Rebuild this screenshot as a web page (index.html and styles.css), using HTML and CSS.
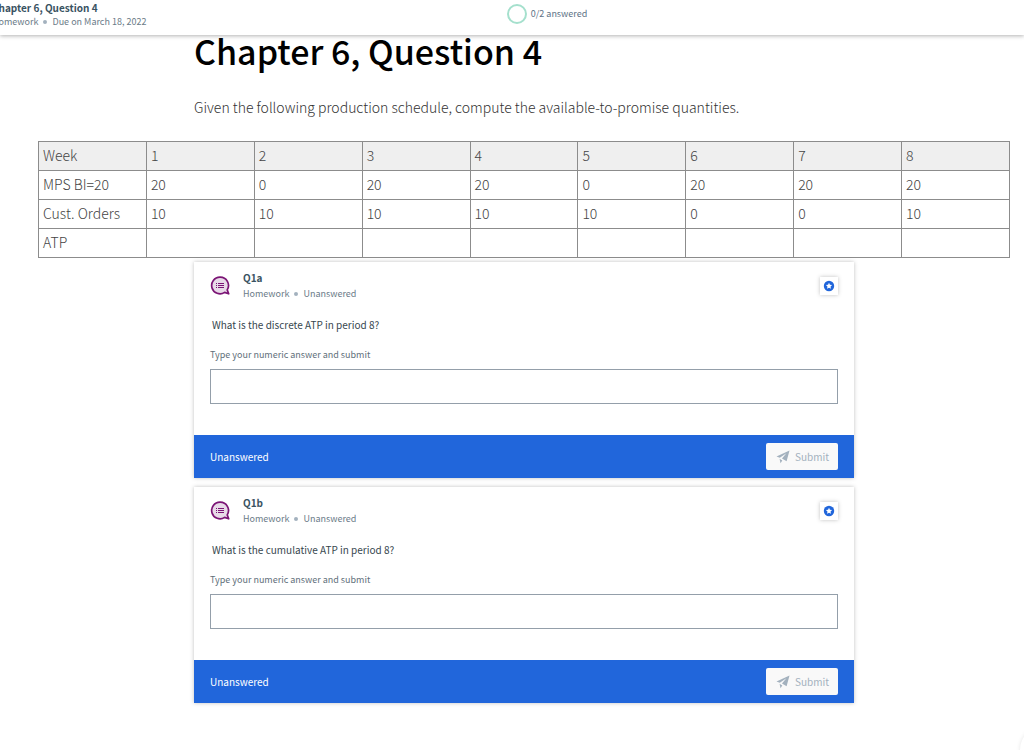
FILE: index.html
```html
<!DOCTYPE html>
<html lang="en">
<head>
    <meta charset="UTF-8">
    <meta name="viewport" content="width=device-width, initial-scale=1.0">
    <title>Chapter 6, Question 4</title>
    <link rel="stylesheet" href="styles.css">
</head>
<body>
    <svg class="sprite" aria-hidden="true">
        <symbol id="icon-question" viewBox="0 0 20 20">
            <path d="M10 1.2a8.3 8.3 0 1 0 4.6 15.2l4.1 1.4-1.5-3.9A8.3 8.3 0 0 0 10 1.2z" fill="#e8dae8" stroke="#7b1475" stroke-width="1.7" stroke-linejoin="round"/>
            <path d="M6 7.5h1M6 9.5h1M6 11.5h1M8 7.5h6M8 9.5h6M8 11.5h6" stroke="#7b1475"/>
        </symbol>
        <symbol id="icon-star" viewBox="0 0 12 12">
            <circle cx="6" cy="6" r="5.2" fill="#2166db"/>
            <path d="M6 2.8l.95 2 2.15.3-1.55 1.5.37 2.2L6 7.75 4.08 8.8l.37-2.2L2.9 5.1l2.15-.3z" fill="#fff"/>
        </symbol>
        <symbol id="icon-send" viewBox="0 0 14 14">
            <path d="M13.5.5L.5 6.5l3.3 1.3L10.4 3.2 6 8.6l4.6 2.6zM3.6 8.8l.9 4.4 1.8-2.8z" fill="#a3b1be"/>
        </symbol>
    </svg>

    <header class="topbar">
        <div class="topbar-title">
            <strong>Chapter 6, Question 4</strong>
            <div class="meta">Homework <span class="dot"></span> Due on March 18, 2022</div>
        </div>
        <div class="progress">
            <span class="ring"></span>
            <span>0/2 answered</span>
        </div>
    </header>

    <main>
        <div class="intro">
            <h1>Chapter 6, Question 4</h1>
            <p>Given the following production schedule, compute the available-to-promise quantities.</p>
        </div>

        <table class="schedule">
            <thead>
                <tr><th>Week</th><th>1</th><th>2</th><th>3</th><th>4</th><th>5</th><th>6</th><th>7</th><th>8</th></tr>
            </thead>
            <tbody>
                <tr><th>MPS BI=20</th><td>20</td><td>0</td><td>20</td><td>20</td><td>0</td><td>20</td><td>20</td><td>20</td></tr>
                <tr><th>Cust. Orders</th><td>10</td><td>10</td><td>10</td><td>10</td><td>10</td><td>0</td><td>0</td><td>10</td></tr>
                <tr><th>ATP</th><td></td><td></td><td></td><td></td><td></td><td></td><td></td><td></td></tr>
            </tbody>
        </table>

        <form class="question">
            <div class="question-head">
                <svg class="question-icon"><use href="#icon-question"/></svg>
                <div class="question-title">
                    <h2>Q1a</h2>
                    <div class="meta">Homework <span class="dot"></span> Unanswered</div>
                </div>
                <button type="button" class="star" aria-label="Bookmark"><svg><use href="#icon-star"/></svg></button>
            </div>
            <p class="prompt">What is the discrete ATP in period 8?</p>
            <label for="q1a">Type your numeric answer and submit</label>
            <input type="text" id="q1a" name="q1a">
            <div class="question-foot">
                <span>Unanswered</span>
                <button type="submit" class="submit" disabled><svg><use href="#icon-send"/></svg>Submit</button>
            </div>
        </form>

        <form class="question">
            <div class="question-head">
                <svg class="question-icon"><use href="#icon-question"/></svg>
                <div class="question-title">
                    <h2>Q1b</h2>
                    <div class="meta">Homework <span class="dot"></span> Unanswered</div>
                </div>
                <button type="button" class="star" aria-label="Bookmark"><svg><use href="#icon-star"/></svg></button>
            </div>
            <p class="prompt">What is the cumulative ATP in period 8?</p>
            <label for="q1b">Type your numeric answer and submit</label>
            <input type="text" id="q1b" name="q1b">
            <div class="question-foot">
                <span>Unanswered</span>
                <button type="submit" class="submit" disabled><svg><use href="#icon-send"/></svg>Submit</button>
            </div>
        </form>
    </main>

    <button type="button" class="help" aria-label="Help"></button>
</body>
</html>
```
FILE: styles.css
```css
* {
    box-sizing: border-box;
}
body {
    margin: 0;
    background: #fff;
    color: #37474f;
    font-family: "Noto Sans CJK SC", "Open Sans", sans-serif;
    font-size: 10px;
    line-height: 16px;
}
h1, h2, p {
    margin: 0;
}
button, input {
    font-family: inherit;
}
.sprite {
    display: none;
}

/* top bar */
.topbar {
    display: grid;
    grid-template-columns: 1fr auto 1fr;
    height: 35px;
    background: #fff;
    box-shadow: 0 1px 4px rgba(0, 0, 0, 0.3);
}
.topbar-title {
    margin-left: -8px;
}
.topbar-title strong {
    display: block;
    font-size: 10px;
    font-weight: 700;
    line-height: 16px;
    color: #3a5362;
}
.meta {
    display: flex;
    align-items: center;
    gap: 5px;
    font-size: 9px;
    line-height: 12px;
    color: #6b7b88;
}
.dot {
    width: 4px;
    height: 4px;
    border-radius: 50%;
    background: #a3b1be;
}
.progress {
    display: flex;
    align-items: center;
    gap: 4px;
    height: 28px;
    padding-left: 70px;
    font-size: 9px;
    color: #5d7285;
}
.ring {
    width: 20px;
    height: 20px;
    border: 2px solid #a5e0cd;
    border-radius: 50%;
}

main {
    padding: 0 14px 48px 38px;
}
.intro, .question {
    max-width: 660px;
    margin: 0 auto;
}
h1 {
    font-size: 34px;
    font-weight: 500;
    line-height: 32px;
    color: #000;
}
.intro p {
    padding: 28px 0 22px;
    font-size: 14px;
    font-weight: 300;
    line-height: 24px;
    color: #333;
}

/* schedule */
.schedule {
    width: 100%;
    border-collapse: collapse;
    table-layout: fixed;
    margin-bottom: 4px;
    font-size: 14px;
    line-height: 20px;
    color: #444;
}
.schedule th, .schedule td {
    height: 29px;
    padding: 3px 4px 5px;
    border: 1px solid #8c8c8c;
    font-weight: 300;
    text-align: left;
}
.schedule thead {
    background: #efefef;
}

/* question cards */
.question {
    display: flex;
    flex-direction: column;
    margin-bottom: 9px;
    background: #fff;
    box-shadow: 0 0 4px rgba(0, 0, 0, 0.25);
}
.question-head {
    display: flex;
    padding: 8px 16px 0;
}
.question-icon {
    width: 20px;
    height: 20px;
    margin-top: 6px;
}
.question-title {
    flex: 1;
    padding-left: 13px;
}
h2 {
    padding-bottom: 2px;
    font-size: 10px;
    font-weight: 700;
    line-height: 16px;
    color: #3a5362;
}
.star {
    display: flex;
    align-items: center;
    justify-content: center;
    width: 18px;
    height: 18px;
    margin-top: 7px;
    padding: 0;
    border: none;
    background: #fff;
    box-shadow: 0 0 4px rgba(0, 0, 0, 0.25);
}
.star svg {
    width: 12px;
    height: 12px;
}
.prompt {
    padding: 17px 18px 0;
    font-size: 10px;
}
.question label {
    padding: 14px 16px 6px;
    font-size: 9px;
    color: #5f6f7a;
}
.question input {
    height: 35px;
    margin: 0 16px 31px;
    padding: 0 8px;
    border: 1px solid #949faa;
    font-size: 10px;
}
.question-foot {
    display: flex;
    align-items: center;
    justify-content: space-between;
    height: 43px;
    padding: 0 16px;
    background: #2166db;
    color: #fff;
}
.submit {
    display: flex;
    align-items: center;
    gap: 5px;
    height: 27px;
    padding: 0 9px 0 10px;
    border: none;
    border-radius: 2px;
    background: #f9f9f9;
    color: #a3b1be;
    font-size: 10px;
}
.submit svg {
    width: 14px;
    height: 14px;
}

/* floating help button, tucked into the corner */
.help {
    position: fixed;
    right: -44px;
    bottom: -24px;
    width: 48px;
    height: 48px;
    border: none;
    border-radius: 50%;
    background: #fff;
    box-shadow: 0 0 4px rgba(0, 0, 0, 0.1);
}
```
